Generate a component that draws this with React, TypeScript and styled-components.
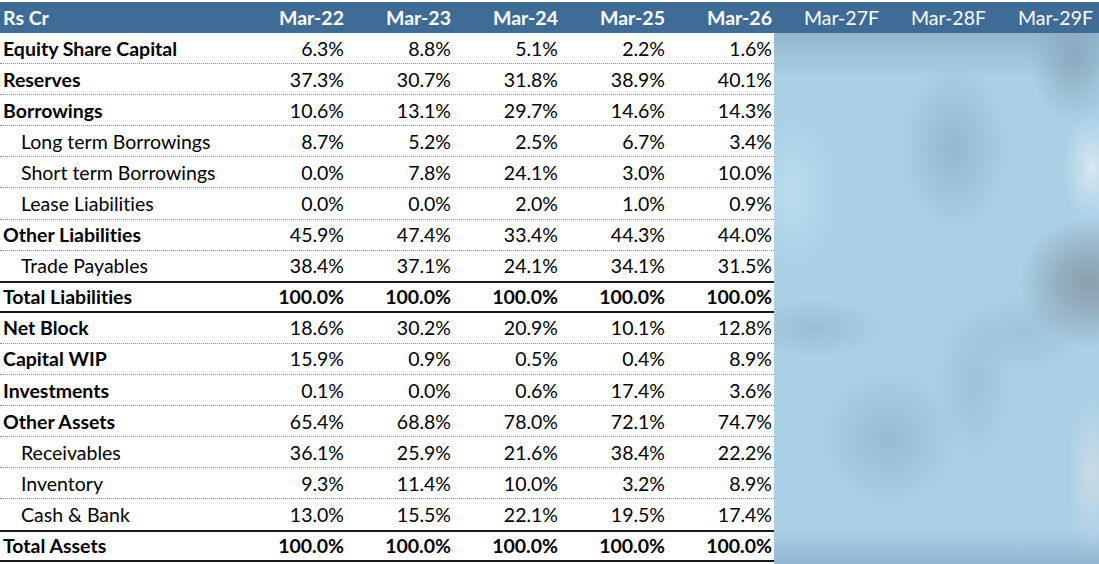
import React from "react";
import styled, { createGlobalStyle } from "styled-components";

const GlobalStyle = createGlobalStyle`
  html, body {
    margin: 0;
    padding: 0;
    background: #ffffff;
  }
  body {
    font-family: Lato, "Open Sans", sans-serif;
    font-variant-ligatures: none;
    color: #000000;
  }
`;

const LABEL_W = 239;
const COL_W = 107;

const Sheet = styled.div`
  width: 1099px;
  height: 564px;
  overflow: hidden;
  padding-top: 2px;
  box-sizing: border-box;
`;

const HeaderRow = styled.div`
  display: grid;
  grid-template-columns: ${LABEL_W}px repeat(8, ${COL_W}px) 1fr;
  height: 31px;
  background: #3f6b97;
  color: #ffffff;
  font-size: 19.5px;
  align-items: center;
`;

const HeadCell = styled.div<{ $forecast?: boolean; $left?: boolean }>`
  font-weight: ${(p) => (p.$forecast ? 400 : 700)};
  text-align: ${(p) => (p.$left ? "left" : "right")};
  padding: ${(p) => (p.$left ? "0 0 0 3px" : "0 2px 0 0")};
  white-space: nowrap;
`;

const Body = styled.div`
  display: flex;
`;

const Table = styled.div`
  width: ${LABEL_W + COL_W * 5}px;
  flex: none;
`;

const Row = styled.div<{ $total?: boolean }>`
  display: grid;
  grid-template-columns: ${LABEL_W}px repeat(5, ${COL_W}px);
  align-items: center;
  height: ${(p) => (p.$total ? 32.1 : 31.1)}px;
  box-sizing: border-box;
  font-size: 19.5px;
  font-weight: ${(p) => (p.$total ? 700 : 400)};
  border-bottom: ${(p) => (p.$total ? "2px solid #1a1a1a" : "1px dotted #8a8a8a")};
  ${(p) => (p.$total ? "border-top: 2px solid #1a1a1a; margin-top: -1px;" : "")}
`;

const Label = styled.div<{ $bold?: boolean; $indent?: boolean }>`
  font-weight: ${(p) => (p.$bold ? 700 : "inherit")};
  padding-left: ${(p) => (p.$indent ? 21 : 3)}px;
  white-space: nowrap;
`;

const Value = styled.div`
  text-align: right;
  padding-right: 2px;
`;

/* pixelated screenshot region, redrawn as soft colour patches */
const Blur = styled.div`
  flex: 1;
  height: 531px;
  background-color: #a9d0e5;
  background-image:
    linear-gradient(180deg, rgba(138, 172, 198, 0.7) 0px, rgba(138, 172, 198, 0.3) 25px, rgba(138, 172, 198, 0) 45px),
    radial-gradient(ellipse 45px 70px at 300px 20px, rgba(125, 150, 168, 0.7), rgba(125, 150, 168, 0)),
    radial-gradient(ellipse 55px 85px at 180px 115px, rgba(128, 165, 188, 0.55), rgba(128, 165, 188, 0)),
    radial-gradient(ellipse 70px 65px at 315px 250px, rgba(132, 150, 162, 0.85) 0%, rgba(132, 150, 162, 0.55) 45%, rgba(132, 150, 162, 0) 100%),
    radial-gradient(ellipse 30px 55px at 318px 135px, rgba(216, 232, 242, 0.95), rgba(216, 232, 242, 0)),
    radial-gradient(ellipse 45px 80px at 20px 160px, rgba(195, 225, 242, 0.7), rgba(195, 225, 242, 0)),
    radial-gradient(ellipse 70px 70px at 115px 405px, rgba(135, 172, 194, 0.55), rgba(135, 172, 194, 0)),
    radial-gradient(ellipse 25px 80px at 318px 440px, rgba(205, 220, 230, 0.9), rgba(205, 220, 230, 0)),
    radial-gradient(ellipse 40px 80px at 200px 350px, rgba(140, 178, 200, 0.45), rgba(140, 178, 200, 0)),
    radial-gradient(ellipse 70px 30px at 40px 295px, rgba(145, 178, 200, 0.6), rgba(145, 178, 200, 0)),
    radial-gradient(ellipse 60px 40px at 250px 300px, rgba(150, 180, 200, 0.5), rgba(150, 180, 200, 0)),
    linear-gradient(0deg, rgba(138, 176, 204, 0.8) 0px, rgba(138, 176, 204, 0.3) 20px, rgba(138, 176, 204, 0) 35px);
`;

type Item = { label: string; values: string[]; bold?: boolean; indent?: boolean; total?: boolean };

const rows: Item[] = [
  { label: "Equity Share Capital", values: ["6.3%", "8.8%", "5.1%", "2.2%", "1.6%"], bold: true },
  { label: "Reserves", values: ["37.3%", "30.7%", "31.8%", "38.9%", "40.1%"], bold: true },
  { label: "Borrowings", values: ["10.6%", "13.1%", "29.7%", "14.6%", "14.3%"], bold: true },
  { label: "Long term Borrowings", values: ["8.7%", "5.2%", "2.5%", "6.7%", "3.4%"], indent: true },
  { label: "Short term Borrowings", values: ["0.0%", "7.8%", "24.1%", "3.0%", "10.0%"], indent: true },
  { label: "Lease Liabilities", values: ["0.0%", "0.0%", "2.0%", "1.0%", "0.9%"], indent: true },
  { label: "Other Liabilities", values: ["45.9%", "47.4%", "33.4%", "44.3%", "44.0%"], bold: true },
  { label: "Trade Payables", values: ["38.4%", "37.1%", "24.1%", "34.1%", "31.5%"], indent: true },
  { label: "Total Liabilities", values: ["100.0%", "100.0%", "100.0%", "100.0%", "100.0%"], total: true },
  { label: "Net Block", values: ["18.6%", "30.2%", "20.9%", "10.1%", "12.8%"], bold: true },
  { label: "Capital WIP", values: ["15.9%", "0.9%", "0.5%", "0.4%", "8.9%"], bold: true },
  { label: "Investments", values: ["0.1%", "0.0%", "0.6%", "17.4%", "3.6%"], bold: true },
  { label: "Other Assets", values: ["65.4%", "68.8%", "78.0%", "72.1%", "74.7%"], bold: true },
  { label: "Receivables", values: ["36.1%", "25.9%", "21.6%", "38.4%", "22.2%"], indent: true },
  { label: "Inventory", values: ["9.3%", "11.4%", "10.0%", "3.2%", "8.9%"], indent: true },
  { label: "Cash & Bank", values: ["13.0%", "15.5%", "22.1%", "19.5%", "17.4%"], indent: true },
  { label: "Total Assets", values: ["100.0%", "100.0%", "100.0%", "100.0%", "100.0%"], total: true },
];

const years = ["Mar-22", "Mar-23", "Mar-24", "Mar-25", "Mar-26"];
const forecast = ["Mar-27F", "Mar-28F", "Mar-29F"];

export default function App() {
  return (
    <>
      <GlobalStyle />
      <Sheet>
        <HeaderRow>
          <HeadCell $left>Rs Cr</HeadCell>
          {years.map((y) => (
            <HeadCell key={y}>{y}</HeadCell>
          ))}
          {forecast.map((y) => (
            <HeadCell key={y} $forecast>
              {y}
            </HeadCell>
          ))}
          <div />
        </HeaderRow>
        <Body>
          <Table>
            {rows.map((r) => (
              <Row key={r.label} $total={r.total}>
                <Label $bold={r.bold} $indent={r.indent}>
                  {r.label}
                </Label>
                {r.values.map((v, i) => (
                  <Value key={i}>{v}</Value>
                ))}
              </Row>
            ))}
          </Table>
          <Blur />
        </Body>
      </Sheet>
    </>
  );
}
